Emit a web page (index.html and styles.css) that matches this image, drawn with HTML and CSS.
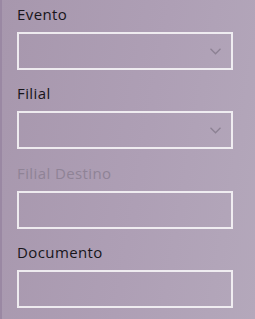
FILE: index.html
```html
<!DOCTYPE html>
<html lang="pt">
<head>
	<meta charset="UTF-8">
	<title>Filtros</title>
	<link rel="stylesheet" href="styles.css">
</head>
<body>
<div class="panel">
	<div class="field">
		<label class="lbl">Evento</label>
		<div class="box combo">
			<svg class="chev" width="11" height="7" viewBox="0 0 11 7"><path d="M0.5 0.8 L5.5 5.8 L10.5 0.8" fill="none" stroke="#8c8193" stroke-width="1.3"/></svg>
		</div>
	</div>
	<div class="field">
		<label class="lbl">Filial</label>
		<div class="box combo">
			<svg class="chev" width="11" height="7" viewBox="0 0 11 7"><path d="M0.5 0.8 L5.5 5.8 L10.5 0.8" fill="none" stroke="#8c8193" stroke-width="1.3"/></svg>
		</div>
	</div>
	<div class="field shift">
		<label class="lbl off">Filial Destino</label>
		<div class="box"></div>
	</div>
	<div class="field">
		<label class="lbl">Documento</label>
		<div class="box"></div>
	</div>
</div>
</body>
</html>
```
FILE: styles.css
```css
html,body{
	margin:0;
	padding:0;
	height:100%;
}
body{
	background:linear-gradient(100deg,#a797ad 0%,#ae9fb5 55%,#b4a8bb 100%);
	font-family:"Open Sans","Noto Sans",sans-serif;
	border-left:2px solid #9a88a3;
	box-sizing:border-box;
}
.panel{
	display:flex;
	flex-direction:column;
	gap:14px;
	padding:5px 22px 0 15px;
}
.field{
	display:flex;
	flex-direction:column;
}
/* compensa o passo de 79/80px */
.field.shift{
	margin-top:1px;
}
.lbl{
	font-size:15px;
	line-height:19px;
	height:19px;
	margin-bottom:8px;
	letter-spacing:0.4px;
	color:#17151a;
}
.lbl.off{
	color:#8f8396;
}
.box{
	height:38px;
	box-sizing:border-box;
	border:2px solid rgba(255,255,255,0.8);
	display:flex;
	align-items:center;
	justify-content:flex-end;
	padding-right:10px;
}
.chev{
	display:block;
}
```
